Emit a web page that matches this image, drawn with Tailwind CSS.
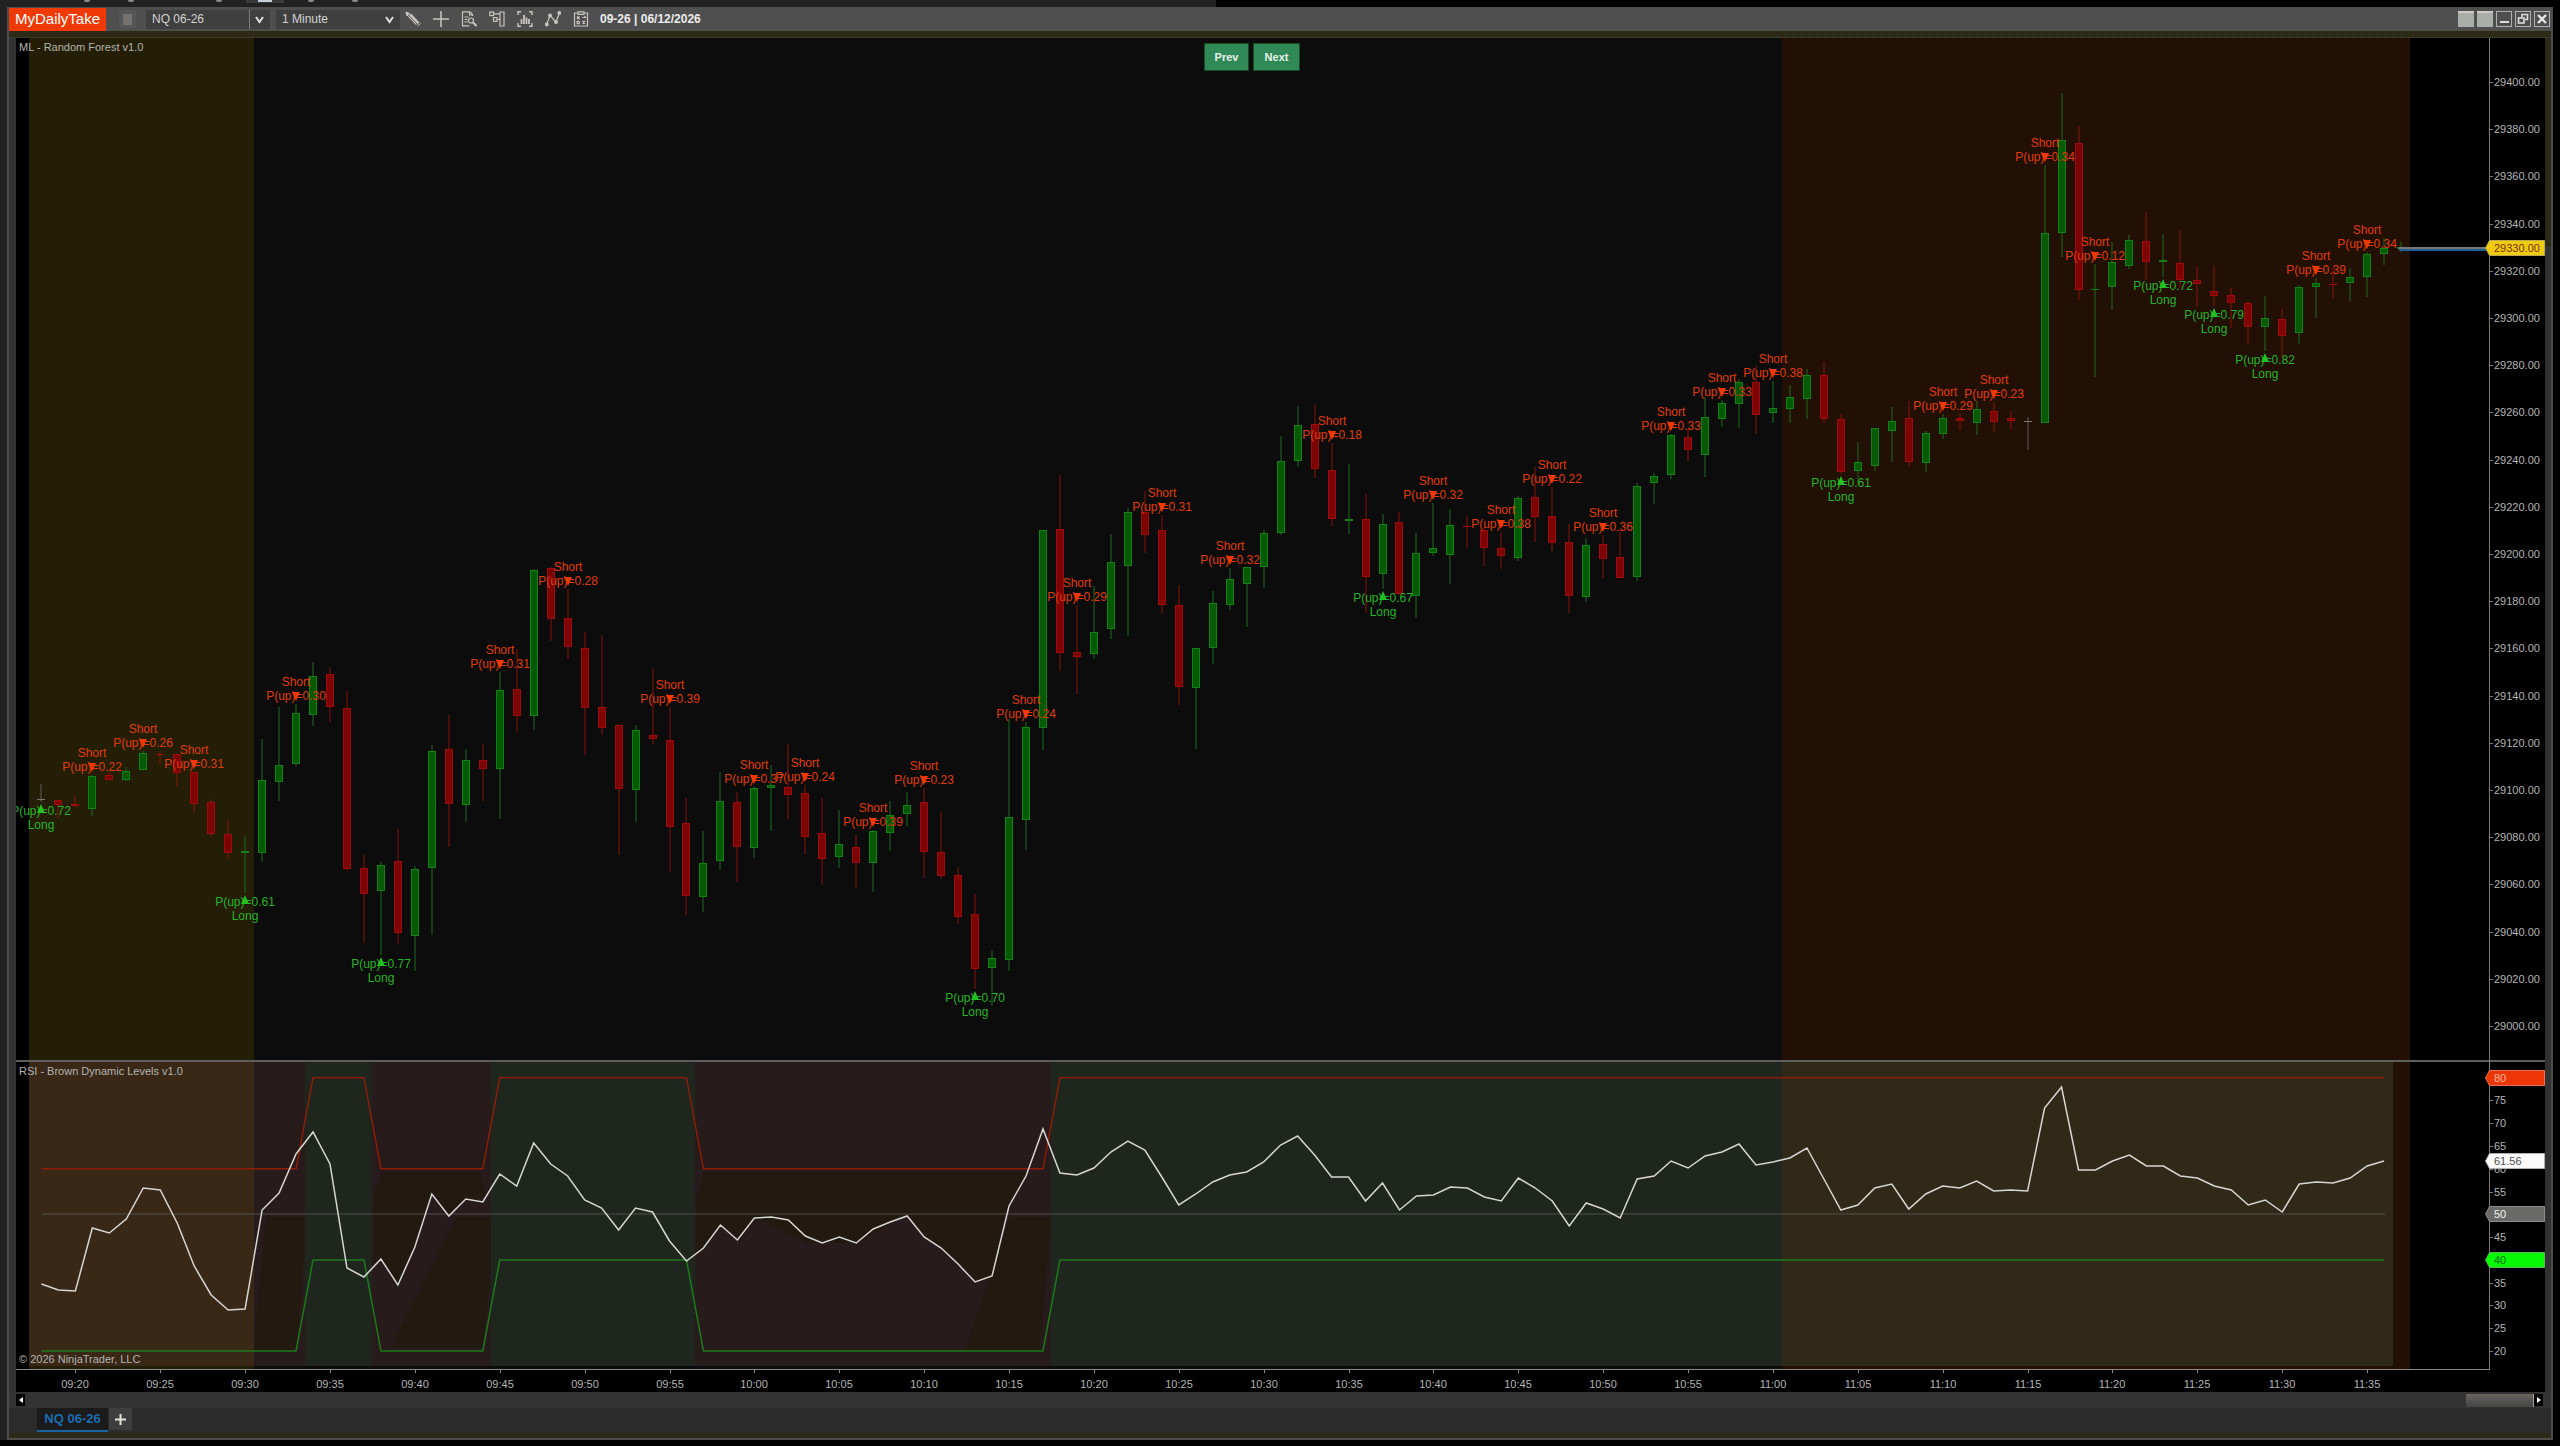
<!DOCTYPE html>
<html lang="en">
<head>
    <meta charset="UTF-8">
    <meta name="viewport" content="width=device-width, initial-scale=1.0">
    <title>NQ 06-26 - 1 Minute</title>
    <script src="https://cdn.jsdelivr.net/npm/@tailwindcss/browser@4"></script>
    <style>
        body {
            font-family: 'Liberation Sans', Arial, sans-serif;
        }
    </style>
</head>
<body class="bg-black text-[#c8c8c8] text-xs">
    <!-- Strip of the window behind -->
    <div class="h-[7px] bg-black">
        <div class="flex items-start w-[47.5%] h-full bg-[#222222] pl-[84px] gap-[38px]">
            <span class="w-[6px] h-[2px] rounded-b bg-[#8a8a8a]"></span>
            <span class="w-[6px] h-[2px] rounded-b bg-[#8a8a8a]"></span>
            <span class="w-[6px] h-[2px] rounded-b bg-[#8a8a8a] ml-[44px]"></span>
            <span class="w-[38px] h-[3px] -ml-[14px] -mr-[14px] bg-[#3a3a3c] flex justify-center"><span class="w-[14px] h-[2px] bg-[#c4d0d8]"></span></span>
            <span class="w-[6px] h-[2px] rounded-b bg-[#8a8a8a]"></span>
            <span class="w-[6px] h-[2px] rounded-b bg-[#8a8a8a]"></span>
        </div>
    </div>

    <div class="flex">
        <div class="w-[7px] shrink-0 bg-[#222222]"></div>

        <!-- Chart window -->
        <div class="flex-1 min-w-0 mr-[7px] border-x-2 border-b-2 border-[#4c4c4c] bg-[#313131]">
            <!-- Title bar -->
            <header class="flex items-center h-6 bg-[#4f4f4f] pr-[1px]">
                <h1 class="flex items-center h-[23px] w-[97px] justify-center bg-[#ef3a08] text-white text-[15px] leading-5">MyDailyTake</h1>

                <button type="button" aria-label="Link" class="ml-[13px] w-[17px] h-[18px] flex items-center justify-center bg-[#565656]">
                    <span class="w-[9px] h-[11px] bg-[#757270]"></span>
                </button>

                <div class="relative ml-[10px] w-[124px] h-[19px]">
                    <select aria-label="Instrument" class="appearance-none w-full h-full bg-[#3f3f3f] pl-[6px] text-xs leading-4 text-[#d2d2d2]">
                        <option>NQ 06-26</option>
                    </select>
                    <span class="absolute right-[20px] inset-y-0 w-px bg-[#808080]"></span>
                    <svg class="absolute right-[6px] top-[6px] pointer-events-none" width="9" height="8" viewBox="0 0 9 8" fill="none" stroke="#e0e0e0" stroke-width="2"><path d="M1 1l3.5 5L8 1"/></svg>
                </div>
                <div class="relative ml-[6px] w-[124px] h-[19px]">
                    <select aria-label="Interval" class="appearance-none w-full h-full bg-[#3f3f3f] pl-[6px] text-xs leading-4 text-[#d2d2d2]">
                        <option>1 Minute</option>
                    </select>
                    <svg class="absolute right-[6px] top-[6px] pointer-events-none" width="9" height="8" viewBox="0 0 9 8" fill="none" stroke="#e0e0e0" stroke-width="2"><path d="M1 1l3.5 5L8 1"/></svg>
                </div>

                <!-- Tools -->
                <div class="flex items-center gap-3 ml-[5px] text-[#c9c6c0]">
                    <button type="button" aria-label="Drawing tools">
                        <svg width="16" height="16" viewBox="0 0 16 16" fill="none" stroke="currentColor"><path d="M1 1l1 4 2.500-2.500z" fill="currentColor"/><path d="M3 5.500l8 8.500 3.500-2.500L6 2.500z" fill="currentColor" stroke="none"/><path d="M4.500 5l8 8.500" stroke="#5a5a5a"/><path d="M12.500 15l3-2.500"/></svg>
                    </button>
                    <button type="button" aria-label="Cursor">
                        <svg width="16" height="16" viewBox="0 0 16 16" fill="none" stroke="currentColor" stroke-width="1.500"><path d="M8 0v16M0 8h16"/></svg>
                    </button>
                    <button type="button" aria-label="Data box">
                        <svg width="16" height="16" viewBox="0 0 16 16" fill="none" stroke="currentColor" stroke-width="1.200"><path d="M11.500 5V3.500L9 .8H1.500v14h7M8.500 1v3h3M3.500 6h4M3.500 8.500h3M3.500 11h3"/><circle cx="10" cy="9.500" r="2.500"/><path d="M12 11.500l3.500 3.500" stroke-width="2"/></svg>
                    </button>
                    <button type="button" aria-label="Chart trader">
                        <svg width="16" height="16" viewBox="0 0 16 16" fill="none" stroke="currentColor" stroke-width="1.200"><path d="M11 1h4v14h-4zM11 2.800H4.500M11 8.500H8"/><rect x=".8" y="1" width="3.700" height="3.600"/><rect x="4.500" y="6.700" width="3.500" height="3.600"/></svg>
                    </button>
                    <button type="button" aria-label="Chart style">
                        <svg width="16" height="16" viewBox="0 0 16 16" fill="none" stroke="currentColor" stroke-width="1.400"><path d="M4 .8H1V4M12 .8h3V4M4 15.200H1V12M12 15.200h3V12"/><path d="M4.500 13V8M7 13V4M9.500 13V6.500M12 13V8" stroke-width="1.800"/></svg>
                    </button>
                    <button type="button" aria-label="Indicators">
                        <svg width="16" height="16" viewBox="0 0 16 16" fill="none" stroke="currentColor" stroke-width="1.200"><path d="M1.500 14L5 4.500l6 6.500L14.500 2"/><circle cx="1.800" cy="13.500" r="1.300" fill="currentColor"/><circle cx="5" cy="4.500" r="1.300" fill="currentColor"/><circle cx="11" cy="11" r="1.300" fill="currentColor"/><circle cx="14.300" cy="2" r="1.300" fill="currentColor"/></svg>
                    </button>
                    <button type="button" aria-label="Strategies">
                        <svg width="16" height="16" viewBox="0 0 16 16" fill="none" stroke="currentColor" stroke-width="1.200"><path d="M5 2H1.500v13h13V2H11M5 .8h6v2.500H5z"/><path d="M4 5.500l2.500 2.500M6.500 5.500L4 8M9.500 6.500h3l-1.200-1.500M9.500 10l2.500 2.500M12 10l-2.500 2.500"/><circle cx="5.200" cy="11.500" r="1.300"/></svg>
                    </button>
                </div>
                <span class="ml-[11px] font-bold text-xs leading-4 text-[#ececec]">09-26 | 06/12/2026</span>

                <!-- Window buttons -->
                <div class="ml-auto flex items-center gap-[3px]">
                    <button type="button" aria-label="Tab left" class="w-4 h-4 bg-[#abaea8] border-t-2 border-[#d0c8c4]"></button>
                    <button type="button" aria-label="Tab right" class="w-4 h-4 bg-[#abaea8] border-t-2 border-[#d0c8c4]"></button>
                    <button type="button" aria-label="Minimize" class="w-4 h-4 border border-[#b0b0b0] flex items-end justify-center pb-[3px]"><span class="w-[9px] h-[2px] bg-[#dcdcdc]"></span></button>
                    <button type="button" aria-label="Restore" class="w-4 h-4 border border-[#b0b0b0] flex items-center justify-center">
                        <svg width="12" height="12" viewBox="0 0 12 12" fill="none" stroke="#dcdcdc" stroke-width="1.600"><path d="M5 4V1.500h5.500v5H8"/><rect x="1.500" y="5" width="5.500" height="5"/></svg>
                    </button>
                    <button type="button" aria-label="Close" class="w-4 h-4 border border-[#b0b0b0] flex items-center justify-center">
                        <svg width="10" height="10" viewBox="0 0 10 10" fill="none" stroke="#e4e4e4" stroke-width="2.400"><path d="M1 1l8 8M9 1L1 9"/></svg>
                    </button>
                </div>
            </header>
            <div class="h-[7px] bg-[#2c2917] border-b border-dotted border-[#4a4c40]"></div>

            <!-- Chart -->
            <main class="relative flex pl-[7px]">
                <svg id="chart" class="block flex-1 min-w-0 bg-black" viewBox="16 38 2529 1354" font-family="'Liberation Sans', Arial, sans-serif" font-size="11"></svg>
                <div class="w-[6px] shrink-0"><div class="h-[208px] bg-[#2c2917]"></div></div>
                <div class="absolute inset-x-0 top-[5px] pr-14 flex justify-center gap-1">
                    <button type="button" class="h-7 w-[45px] bg-[#2f8a58] border border-[#1c4a20] text-[#e8f0ea] text-[11px] font-bold">Prev</button>
                    <button type="button" class="h-7 w-[47px] bg-[#2f8a58] border border-[#1c4a20] text-[#e8f0ea] text-[11px] font-bold">Next</button>
                </div>
            </main>

            <!-- Horizontal scroll bar -->
            <div class="flex items-center h-4 pl-[7px] pr-[8px] bg-[#333333]">
                <button type="button" aria-label="Scroll left" class="w-[9px] h-3 bg-black flex items-center justify-center">
                    <svg width="4" height="6" viewBox="0 0 4 6" fill="#ffffff"><path d="M4 0v6L0 3z"/></svg>
                </button>
                <div class="ml-auto w-[68px] h-[13px] bg-linear-to-b from-[#6a645e] to-[#444444] border-r border-[#a0a0a0]"></div>
                <button type="button" aria-label="Scroll right" class="w-[9px] h-3 bg-black flex items-center justify-center">
                    <svg width="4" height="6" viewBox="0 0 4 6" fill="#ffffff"><path d="M0 0v6l4-3z"/></svg>
                </button>
            </div>

            <!-- Tabs -->
            <nav class="flex items-start h-[25px] pl-[28px] bg-[#2c2c2c]">
                <a href="#" class="flex items-center justify-center w-[71px] h-[24px] bg-[#1b1b1b] border-b-2 border-[#1a66a5] text-[#1b6cb0] text-[13px] leading-4 font-bold">NQ 06-26</a>
                <button type="button" aria-label="New tab" class="ml-px w-[23px] h-[22px] bg-[#3e3e3e] flex items-center justify-center">
                    <svg width="11" height="11" viewBox="0 0 11 11" stroke="#e6e2d8" stroke-width="2"><path d="M5.500 0v11M0 5.500h11"/></svg>
                </button>
            </nav>
            <div class="h-[5px] bg-[#2c2917]"></div>
        </div>
    </div>

    <script>
        // One row per minute from 09:18: direction, high, body top, body bottom, low
        const bars = [
            ['w',784,799,800,802], ['r',800,800,805,818], ['r',796,804,806,807], ['g',775,776,809,816],
            ['r',771,775,780,780], ['g',767,771,780,781], ['g',751,753,770,770], ['r',751,754,755,764],
            ['r',754,754,773,787], ['r',772,772,804,813], ['r',799,802,834,837], ['r',819,834,853,859],
            ['g',836,851,853,893], ['g',739,780,853,862], ['g',707,765,782,801], ['g',704,713,764,766],
            ['g',662,676,715,726], ['r',667,674,707,722], ['r',691,708,869,871], ['r',855,868,894,943],
            ['g',862,865,891,955], ['r',829,861,933,944], ['g',866,869,936,971], ['g',745,751,868,935],
            ['r',715,749,804,847], ['g',749,760,805,822], ['r',744,760,769,801], ['g',672,690,769,819],
            ['r',649,689,716,731], ['g',569,570,716,730], ['r',567,568,619,641], ['r',589,618,647,659],
            ['r',632,648,708,755], ['r',635,707,728,735], ['r',725,725,789,855], ['g',725,730,790,822],
            ['r',669,735,739,744], ['r',707,740,827,872], ['r',798,823,896,915], ['g',831,863,897,912],
            ['g',772,801,861,870], ['r',792,802,847,882], ['g',787,788,848,858], ['g',765,785,788,831],
            ['r',744,787,795,819], ['r',785,793,837,854], ['r',798,833,859,885], ['g',810,844,857,868],
            ['r',835,847,863,889], ['g',830,831,863,892], ['g',801,815,833,851], ['g',792,805,814,826],
            ['r',788,802,852,878], ['r',812,852,876,879], ['r',867,875,917,924], ['r',894,914,969,989],
            ['g',951,958,968,1006], ['g',719,817,960,971], ['g',722,727,820,850], ['g',530,530,728,750],
            ['r',475,529,653,671], ['r',605,652,657,694], ['g',586,632,654,659], ['g',534,562,629,639],
            ['g',508,512,566,636], ['r',491,512,535,553], ['r',515,530,605,614], ['r',585,605,687,705],
            ['g',648,648,688,749], ['g',591,603,648,664], ['g',568,579,605,610], ['g',567,567,584,627],
            ['g',530,533,567,588], ['g',436,461,533,535], ['g',406,425,461,467], ['r',405,424,469,478],
            ['r',443,470,519,526], ['g',464,519,521,534], ['r',494,519,577,613], ['g',514,524,574,589],
            ['r',512,522,594,595], ['g',533,553,596,618], ['g',503,548,553,556], ['g',509,525,555,584],
            ['r',516,526,527,548], ['r',527,530,548,566], ['r',532,548,556,569], ['g',496,498,558,561],
            ['r',467,497,517,542], ['r',487,516,543,551], ['r',524,542,596,613], ['g',538,545,597,602],
            ['r',535,544,559,578], ['r',530,557,578,578], ['g',483,486,577,581], ['g',473,476,483,504],
            ['g',434,435,475,479], ['r',429,437,450,461], ['g',397,417,455,477], ['g',400,403,419,427],
            ['g',379,382,404,428], ['r',366,382,415,434], ['g',381,408,413,423], ['g',385,397,409,423],
            ['g',369,375,399,419], ['r',362,375,419,423], ['r',414,419,472,474], ['g',442,462,471,485],
            ['g',428,428,466,471], ['g',407,421,431,462], ['r',401,418,462,466], ['g',431,433,463,472],
            ['g',414,418,434,439], ['r',413,418,421,430], ['g',401,409,423,435], ['r',402,411,422,432],
            ['r',411,418,421,430], ['w',417,421,422,450], ['g',165,233,423,423], ['g',93,140,233,257],
            ['r',126,143,290,300], ['g',264,289,290,377], ['g',242,262,287,310], ['g',235,240,266,269],
            ['r',212,241,262,280], ['g',234,260,262,277], ['r',230,263,280,288], ['r',266,280,284,307],
            ['r',266,291,296,306], ['r',288,295,303,328], ['r',301,303,327,344], ['g',296,318,327,351],
            ['r',309,319,336,357], ['g',285,287,333,344], ['g',278,283,287,318], ['r',268,284,285,298],
            ['g',268,277,283,301], ['g',252,254,277,297], ['g',238,248,254,265], ['g',242,247,249,252]
        ];

        const shorts = {
            3:'0.22', 6:'0.26', 9:'0.31', 15:'0.30', 27:'0.31', 31:'0.28', 37:'0.39', 42:'0.37', 45:'0.24',
            49:'0.39', 52:'0.23', 58:'0.24', 61:'0.29', 66:'0.31', 70:'0.32', 76:'0.18', 82:'0.32', 86:'0.38',
            89:'0.22', 92:'0.36', 96:'0.33', 99:'0.33', 102:'0.38', 112:'0.29', 115:'0.23', 118:'0.34',
            121:'0.12', 134:'0.39', 137:'0.34'
        };
        const longs = {
            0:'0.72', 12:'0.61', 20:'0.77', 55:'0.70', 79:'0.67', 106:'0.61', 125:'0.72', 128:'0.79', 131:'0.82'
        };

        const rsi = [
            1284,1290,1291,1228,1233,1219,1188,1190,1223,1266,1295,1310,1309,1210,1193,1154,1132,1164,1268,1277,
            1259,1285,1247,1194,1216,1199,1202,1174,1186,1143,1164,1176,1200,1208,1230,1208,1212,1241,1261,1248,
            1225,1240,1218,1217,1220,1236,1243,1237,1243,1229,1222,1216,1237,1248,1264,1282,1276,1206,1176,1129,
            1173,1175,1168,1152,1141,1150,1177,1205,1194,1182,1175,1172,1162,1145,1136,1155,1177,1177,1201,1183,
            1210,1196,1195,1187,1188,1197,1201,1178,1188,1201,1226,1203,1209,1218,1179,1176,1161,1168,1156,1152,
            1144,1165,1162,1158,1148,1179,1210,1205,1188,1184,1209,1194,1186,1188,1181,1191,1190,1191,1108,1087,
            1170,1170,1161,1155,1166,1166,1176,1178,1186,1190,1205,1200,1212,1184,1182,1183,1178,1166,1161
        ];

        // Bars at which the RSI range changes; true = bullish range (40-80), false = bearish (20-60)
        const ranges = [[0, 15, false], [16, 19, true], [20, 26, false], [27, 38, true], [39, 59, false], [60, 138, true]];

        const barX = i => 41.4 + 16.976 * i;
        const priceY = p => 82 + (29400 - p) * 2.36;
        const rsiY = v => 1351 - (v - 20) * 4.555;
        const rect = (x, y, x2, y2, fill) => `<rect x="${x}" y="${y}" width="${x2 - x}" height="${y2 - y}" fill="${fill}"/>`;
        const colors = {
            g: ['#1a6a1e', '#065a06', '#128212'],
            r: ['#86140a', '#7d0404', '#a00a0a'],
            w: ['#5c5c5c', '#777777', '#777777']
        };
        let out = '';

        // Session zones
        out += rect(29, 38, 254, 1369, '#241e07');
        out += rect(254, 38, 1782, 1369, '#0c0c0c');
        out += rect(1782, 38, 2410, 1369, '#231005');

        // RSI range zones
        out += rect(29, 1062, 254, 1366, '#3a2817');
        for (const [from, to, bull] of ranges) {
            out += rect(Math.max(254, Math.round(barX(from - 0.5))), 1062, Math.min(1782, Math.round(barX(to + 0.5))), 1366, bull ? '#1e261e' : '#281b1b');
        }
        out += rect(1782, 1062, 2393, 1366, '#302918');
        out += `<g fill="#20190f" fill-opacity="0.8">
            <path d="M254 1348L266 1217H304V1250L297 1350H254z"/>
            <path d="M383 1171H480L487 1197L467 1199L449 1215L432 1194L414 1247L398 1283L381 1259L373 1263V1197z"/>
            <path d="M456 1217H491V1267L483 1348H390z"/>
            <path d="M704 1171H1028L1010 1206L993 1276L976 1282L958 1264L925 1237L905 1216L857 1243L806 1243L756 1218L740 1240L723 1225L696 1255V1200z"/>
            <path d="M1010 1217H1051L1040 1350H965z"/>
        </g>`;

        // Price bars
        bars.forEach(([dir, high, top, bottom, low], i) => {
            const x = Math.round(barX(i));
            const [wick, fill, edge] = colors[dir];
            out += rect(x - 0.5, high, x + 0.5, low, wick);
            if (bottom - top < 3) out += rect(x - 4, top, x + 4, Math.max(bottom, top + 1), edge);
            else out += `<rect x="${x - 3.5}" y="${top + 0.5}" width="7" height="${bottom - top - 1}" fill="${fill}" stroke="${edge}"/>`;
        });

        // Last price line
        out += rect(2399, 247, 2486, 249, '#77777c') + rect(2399, 249, 2486, 251, '#1f5f95');

        // Signals
        out += '<g font-size="12" text-anchor="middle" fill="#e03c0a">';
        for (const i in shorts) {
            const x = Math.round(barX(i)), y = bars[i][1];
            out += `<text x="${x}" y="${y - 18}">Short</text><text x="${x}" y="${y - 4}">P(up)=${shorts[i]}</text>`;
            out += `<path d="M${x - 4} ${y - 12}h8l-4 9z" fill="#f03806"/>`;
        }
        out += '</g><g font-size="12" text-anchor="middle" fill="#26b426">';
        for (const i in longs) {
            const x = Math.round(barX(i)), y = bars[i][4];
            out += `<text x="${x}" y="${y + 13}">P(up)=${longs[i]}</text><text x="${x}" y="${y + 27}">Long</text>`;
            out += `<path d="M${x - 4} ${y + 11}h8l-4 -9z" fill="#22c022"/>`;
        }
        out += '</g>';

        // RSI levels and line
        const level = (low, high) => ranges.map(([from, to, bull]) => {
            const y = rsiY(bull ? high : low);
            return `${barX(from)},${y} ${barX(to)},${y}`;
        }).join(' ');
        out += rect(42, 1213.5, 2385, 1214.5, '#50504c');
        out += `<polyline points="${level(60, 80)}" fill="none" stroke="#8e1c0a" stroke-width="1.5"/>`;
        out += `<polyline points="${level(20, 40)}" fill="none" stroke="#1c7a1c" stroke-width="1.5"/>`;
        out += `<polyline points="${rsi.map((y, i) => barX(i) + ',' + y).join(' ')}" fill="none" stroke="#d6d6d2" stroke-width="1.5"/>`;

        // Axes
        out += rect(16, 1060, 2545, 1062, '#5e5e5c');
        out += rect(2489, 38, 2490, 1370, '#7a7a76');
        out += rect(16, 1369, 2490, 1370, '#8a8a86');
        out += '<g fill="#b4b4b4">';
        for (let p = 29400; p >= 29000; p -= 20) {
            const y = Math.round(priceY(p));
            out += rect(2490, y, 2493, y + 1, '#7a7a76') + `<text x="2494" y="${y + 4}">${p}.00</text>`;
        }
        for (let v = 75; v >= 20; v -= 5) {
            const y = Math.round(rsiY(v));
            out += rect(2490, y, 2493, y + 1, '#7a7a76') + `<text x="2494" y="${y + 4}">${v}</text>`;
        }
        for (let i = 2; i <= 137; i += 5) {
            const x = Math.round(barX(i)), min = 18 + i;
            const label = String(9 + Math.floor(min / 60)).padStart(2, '0') + ':' + String(min % 60).padStart(2, '0');
            out += rect(x, 1370, x + 1, 1373, '#8a8a86') + `<text x="${x}" y="1388" text-anchor="middle">${label}</text>`;
        }
        out += '</g>';

        // Price markers
        const marker = (y, fill, edge, color, label) =>
            `<path d="M2485.5 ${y}l4 -7.500h55v15h-55z" fill="${fill}" stroke="${edge}"/><text x="2494" y="${y + 4}" fill="${color}">${label}</text>`;
        out += marker(248, '#efcb10', '#b8a850', '#7c3010', '29330.00');
        out += marker(1078, '#ec3606', '#e8705a', '#ffb8a0', '80');
        out += marker(1161, '#fafafa', '#b0b0b0', '#505050', '61.56');
        out += marker(1214, '#6a6a68', '#8c8c8c', '#f0f0f0', '50');
        out += marker(1260, '#06fa06', '#58b858', '#0c6a0c', '40');

        // Panel titles
        out += `<g fill="#b4b4b0"><text x="19" y="51">ML - Random Forest v1.0</text>
            <text x="19" y="1075">RSI - Brown Dynamic Levels v1.0</text>
            <text x="19" y="1363">© 2026 NinjaTrader, LLC</text></g>`;

        document.getElementById('chart').innerHTML = out;
    </script>
</body>
</html>
